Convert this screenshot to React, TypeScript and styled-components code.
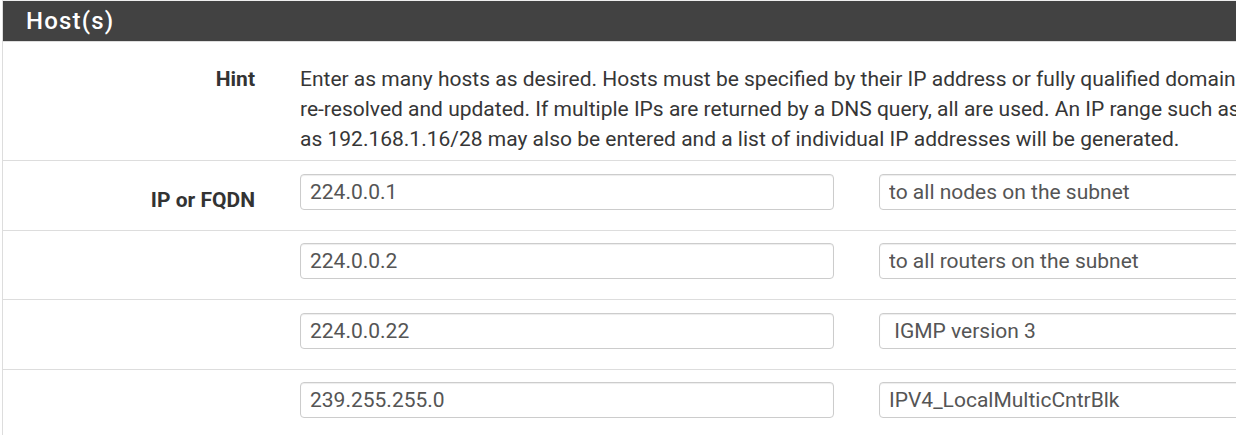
import styled, { createGlobalStyle } from 'styled-components';

const GlobalStyle = createGlobalStyle`
  html, body {
    margin: 0;
    padding: 0;
    background: #ffffff;
    overflow: hidden;
  }
  body {
    font-family: Roboto, "Liberation Sans", Arial, sans-serif;
    color: #333333;
  }
`;

const Panel = styled.section`
  width: 1800px;
  margin-left: 2px;
  border-left: 1px solid #dddddd;
  border-top: 1px solid #eeeeee;
  background: #ffffff;
`;

const PanelHeading = styled.header`
  height: 40px;
  display: flex;
  align-items: center;
  padding-left: 23px;
  background: #424242;
  border-bottom: 1px solid #dddddd;
`;

const PanelTitle = styled.h2`
  margin: 0;
  font-size: 24px;
  font-weight: 500;
  letter-spacing: 1.2px;
  color: #ffffff;
`;

const Row = styled.div<{ $tall?: boolean }>`
  display: grid;
  grid-template-columns: 282px 1fr;
  align-items: start;
  border-bottom: 1px solid #dddddd;
  padding: ${(p) => (p.$tall ? '22px 0 6px' : '12.5px 0 20px')};
`;

const Label = styled.div<{ $offset: number }>`
  padding-right: 30px;
  padding-top: ${(p) => p.$offset}px;
  text-align: right;
  font-size: 21px;
  font-weight: 700;
  line-height: 18px;
  color: #333333;
`;

const HintText = styled.div`
  padding-left: 15px;
  font-size: 21px;
  line-height: 30px;
  color: #363636;
  white-space: nowrap;
`;

const Fields = styled.div`
  display: grid;
  grid-template-columns: 534px 534px;
  column-gap: 45px;
  padding-left: 15px;
`;

const TextInput = styled.input`
  box-sizing: border-box;
  display: block;
  height: 36px;
  width: 100%;
  padding: 0 9px;
  border: 1px solid #cccccc;
  border-radius: 4px;
  box-shadow: inset 0 1px 1px rgba(0, 0, 0, 0.075);
  font-family: Roboto, "Liberation Sans", Arial, sans-serif;
  font-size: 21px;
  color: #555555;
  background: #ffffff;
  outline: none;
`;

const hosts = [
  { address: '224.0.0.1', description: 'to all nodes on the subnet' },
  { address: '224.0.0.2', description: 'to all routers on the subnet' },
  { address: '224.0.0.22', description: ' IGMP version 3' },
  { address: '239.255.255.0', description: 'IPV4_LocalMulticCntrBlk' },
];

const App = () => {
  return (
    <>
      <GlobalStyle />
      <Panel>
        <PanelHeading>
          <PanelTitle>Host(s)</PanelTitle>
        </PanelHeading>
        <Row $tall>
          <Label $offset={6}>Hint</Label>
          <HintText>
            Enter as many hosts as desired. Hosts must be specified by their IP address or fully qualified domain name (FQDN). FQDN hostnames are periodically
            <br />
            re-resolved and updated. If multiple IPs are returned by a DNS query, all are used. An IP range such as 192.168.1.1-192.168.1.10 or a small subnet such
            <br />
            as 192.168.1.16/28 may also be entered and a list of individual IP addresses will be generated.
          </HintText>
        </Row>
        {hosts.map((host, i) => (
          <Row key={host.address}>
            <Label $offset={17.5}>{i === 0 ? 'IP or FQDN' : ''}</Label>
            <Fields>
              <TextInput defaultValue={host.address} />
              <TextInput defaultValue={host.description} />
            </Fields>
          </Row>
        ))}
      </Panel>
    </>
  );
};

export default App;
